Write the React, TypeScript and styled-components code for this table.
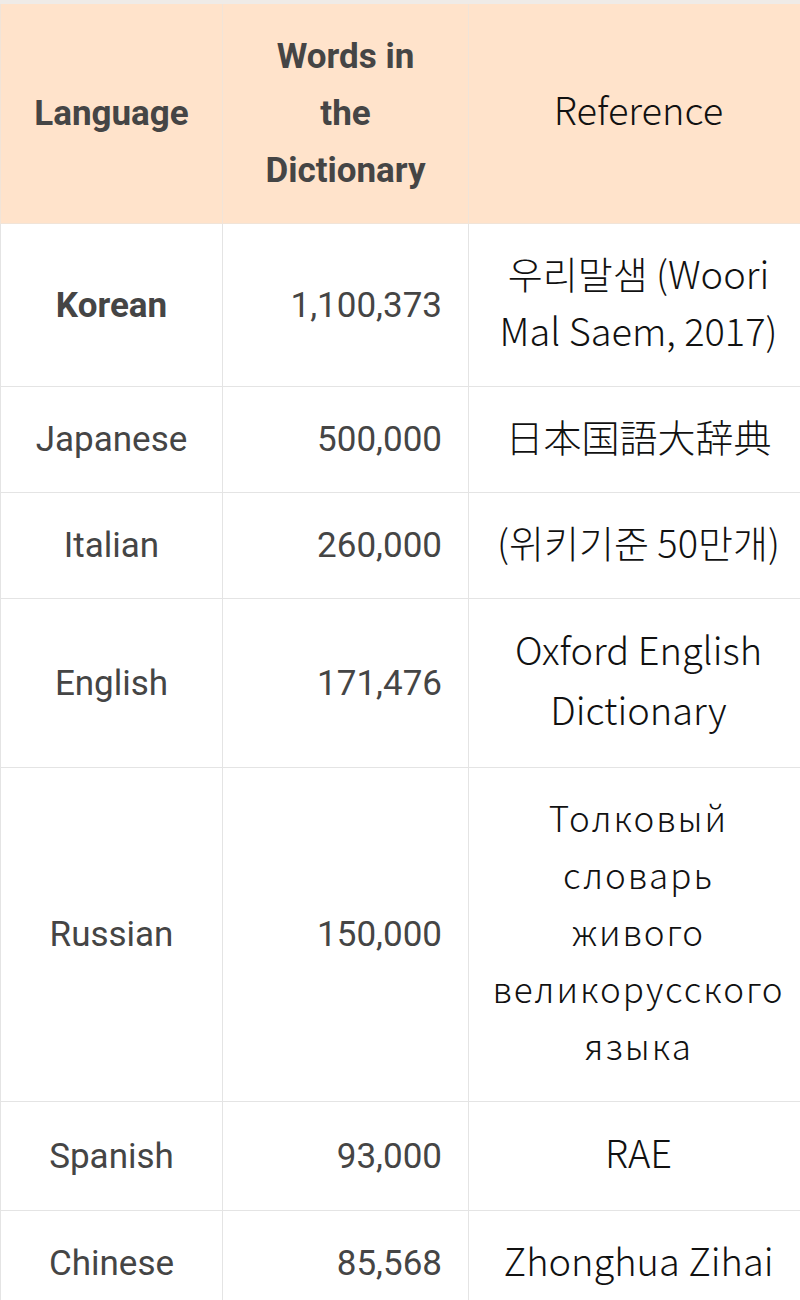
import styled, { createGlobalStyle } from 'styled-components';

const GlobalStyles = createGlobalStyle`
  html, body {
    margin: 0;
    padding: 0;
    background: #ffffff;
    overflow: hidden;
  }
`;

const Wrapper = styled.div`
  width: 808px;
  border-top: 4px solid #efebe7;
`;

const Table = styled.table`
  width: 808px;
  table-layout: fixed;
  border-collapse: collapse;
  font-family: Roboto, 'Noto Sans', sans-serif;
`;

const HeadCell = styled.th<{ $ref?: boolean }>`
  background: #ffe3cb;
  border: 1px solid #f1e4d8;
  border-top: none;
  padding: ${(p) => (p.$ref ? '19px 10px 29px' : '24px 10px')};
  font-size: ${(p) => (p.$ref ? '38px' : '35px')};
  font-weight: ${(p) => (p.$ref ? 300 : 700)};
  font-family: ${(p) =>
    p.$ref ? "'Noto Sans CJK KR', 'Noto Sans', sans-serif" : "Roboto, 'Noto Sans', sans-serif"};
  line-height: 57px;
  color: ${(p) => (p.$ref ? '#111111' : '#454545')};
  text-align: center;
  vertical-align: middle;
`;

const Cell = styled.td<{ $align?: 'left' | 'right' | 'center'; $bold?: boolean }>`
  border: 1px solid #e4e4e4;
  padding: 24px 26px 24px 10px;
  font-size: 35px;
  line-height: 57px;
  color: #454545;
  font-weight: ${(p) => (p.$bold ? 700 : 400)};
  text-align: ${(p) => p.$align || 'center'};
  vertical-align: middle;
`;

const LangCell = styled(Cell)`
  padding: 24px 10px;
`;

const RefCell = styled.td<{ $wide?: boolean; $tall?: boolean }>`
  border: 1px solid #e4e4e4;
  padding: 20px 10px 28px;
  font-family: 'Noto Sans CJK KR', 'Noto Sans', sans-serif;
  font-size: ${(p) => (p.$wide ? '35px' : '38px')};
  font-weight: 300;
  line-height: ${(p) => (p.$tall ? '60px' : '57px')};
  color: #111111;
  text-align: center;
  vertical-align: middle;
  letter-spacing: ${(p) => (p.$wide ? '2px' : 'normal')};
`;

type Row = {
  lang: string;
  words: string;
  ref: string[];
  bold?: boolean;
  wide?: boolean;
  tall?: boolean;
};

const rows: Row[] = [
  { lang: 'Korean', words: '1,100,373', ref: ['우리말샘 (Woori Mal Saem, 2017)'], bold: true },
  { lang: 'Japanese', words: '500,000', ref: ['日本国語大辞典'] },
  { lang: 'Italian', words: '260,000', ref: ['(위키기준 50만개)'] },
  { lang: 'English', words: '171,476', ref: ['Oxford English Dictionary'], tall: true },
  {
    lang: 'Russian',
    words: '150,000',
    ref: ['Толковый', 'словарь', 'живого', 'великорусского', 'языка'],
    wide: true,
  },
  { lang: 'Spanish', words: '93,000', ref: ['RAE'], tall: true },
  { lang: 'Chinese', words: '85,568', ref: ['Zhonghua Zihai'] },
];

const App = () => {
  return (
    <Wrapper>
      <GlobalStyles />
      <Table>
        <colgroup>
          <col style={{ width: 222 }} />
          <col style={{ width: 246 }} />
          <col style={{ width: 340 }} />
        </colgroup>
        <thead>
          <tr>
            <HeadCell>Language</HeadCell>
            <HeadCell>
              Words in
              <br />
              the
              <br />
              Dictionary
            </HeadCell>
            <HeadCell $ref>Reference</HeadCell>
          </tr>
        </thead>
        <tbody>
          {rows.map((r) => (
            <tr key={r.lang}>
              <LangCell $bold={r.bold}>{r.lang}</LangCell>
              <Cell $align="right">{r.words}</Cell>
              <RefCell $wide={r.wide} $tall={r.tall}>
                {r.ref.map((line, i) => (
                  <span key={line}>
                    {i > 0 && <br />}
                    {line}
                  </span>
                ))}
              </RefCell>
            </tr>
          ))}
        </tbody>
      </Table>
    </Wrapper>
  );
};

export default App;
